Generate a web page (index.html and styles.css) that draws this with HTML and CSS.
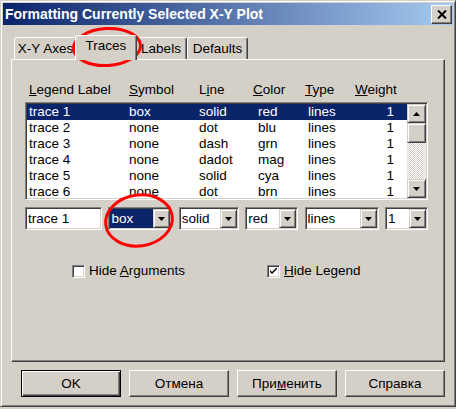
FILE: index.html
```html
<!DOCTYPE html>
<html>
<head>
<meta charset="utf-8">
<link rel="stylesheet" href="styles.css">
</head>
<body>
<div class="window">
  <div class="titlebar">
    <span class="title">Formatting Currently Selected X-Y Plot</span>
    <div class="close raised-btn">
      <svg width="10" height="9" viewBox="0 0 10 9"><path d="M1 0.5 L9 8.5 M9 0.5 L1 8.5" stroke="#000" stroke-width="2" fill="none"/></svg>
    </div>
  </div>
  <div class="body">
    <div class="tabs">
      <div class="tab t1">X-Y Axes</div>
      <div class="tab t2 selected">Traces</div>
      <div class="tab t3">Labels</div>
      <div class="tab t4">Defaults</div>
    </div>
    <div class="panel">
      <div class="cols-head">
        <span><u>L</u>egend Label</span>
        <span><u>S</u>ymbol</span>
        <span>L<u>i</u>ne</span>
        <span><u>C</u>olor</span>
        <span><u>T</u>ype</span>
        <span><u>W</u>eight</span>
      </div>
      <div class="listbox">
        <div class="rows">
          <div class="row sel"><span>trace 1</span><span>box</span><span>solid</span><span>red</span><span>lines</span><span class="w">1</span></div>
          <div class="row"><span>trace 2</span><span>none</span><span>dot</span><span>blu</span><span>lines</span><span class="w">1</span></div>
          <div class="row"><span>trace 3</span><span>none</span><span>dash</span><span>grn</span><span>lines</span><span class="w">1</span></div>
          <div class="row"><span>trace 4</span><span>none</span><span>dadot</span><span>mag</span><span>lines</span><span class="w">1</span></div>
          <div class="row"><span>trace 5</span><span>none</span><span>solid</span><span>cya</span><span>lines</span><span class="w">1</span></div>
          <div class="row"><span>trace 6</span><span>none</span><span>dot</span><span>brn</span><span>lines</span><span class="w">1</span></div>
        </div>
        <div class="scrollbar">
          <div class="sbtn raised"><svg width="7" height="4" viewBox="0 0 7 4"><path d="M3.5 0 L7 4 L0 4 Z" fill="#000"/></svg></div>
          <div class="thumb raised"></div>
          <div class="track"></div>
          <div class="sbtn raised"><svg width="7" height="4" viewBox="0 0 7 4"><path d="M0 0 L7 0 L3.5 4 Z" fill="#000"/></svg></div>
        </div>
      </div>
      <div class="editors">
        <div class="field f1"><span class="val">trace 1</span></div>
        <div class="field f2"><span class="val sel">box</span><div class="drop raised"><svg width="7" height="4" viewBox="0 0 7 4"><path d="M0 0 L7 0 L3.5 4 Z" fill="#000"/></svg></div></div>
        <div class="field f3"><span class="val">solid</span><div class="drop raised"><svg width="7" height="4" viewBox="0 0 7 4"><path d="M0 0 L7 0 L3.5 4 Z" fill="#000"/></svg></div></div>
        <div class="field f4"><span class="val">red</span><div class="drop raised"><svg width="7" height="4" viewBox="0 0 7 4"><path d="M0 0 L7 0 L3.5 4 Z" fill="#000"/></svg></div></div>
        <div class="field f5"><span class="val">lines</span><div class="drop raised"><svg width="7" height="4" viewBox="0 0 7 4"><path d="M0 0 L7 0 L3.5 4 Z" fill="#000"/></svg></div></div>
        <div class="field f6"><span class="val">1</span><div class="drop raised"><svg width="7" height="4" viewBox="0 0 7 4"><path d="M0 0 L7 0 L3.5 4 Z" fill="#000"/></svg></div></div>
      </div>
      <div class="checks">
        <div class="check"><span class="cbox"></span><span>Hide <u>A</u>rguments</span></div>
        <div class="check"><span class="cbox"><svg width="7" height="7" viewBox="0 0 7 7"><path d="M0 2 L0 4 L2 6 L7 1 L7 -1 L2 4 Z" fill="#000"/></svg></span><span><u>H</u>ide Legend</span></div>
      </div>
    </div>
    <div class="buttons">
      <div class="btn default">OK</div>
      <div class="btn">Отмена</div>
      <div class="btn">При<u>м</u>енить</div>
      <div class="btn">Справка</div>
    </div>
  </div>
  <svg class="annot" width="456" height="409" viewBox="0 0 456 409">
    <ellipse cx="106" cy="46" rx="33.5" ry="18.5" fill="none" stroke="#ff0000" stroke-width="3" transform="rotate(-3 106 46)"/>
    <ellipse cx="138" cy="219.5" rx="33.5" ry="25.5" fill="none" stroke="#ff0000" stroke-width="3" transform="rotate(-8 138 219.5)"/>
  </svg>
</div>
</body>
</html>
```

FILE: styles.css
```css
* { box-sizing: border-box; }
body {
  margin: 0;
  background: #d4d0c8;
  font-family: "Liberation Sans", Arial, sans-serif;
  font-size: 13.5px;
  color: #000;
}
.window {
  position: relative;
  width: 456px;
  height: 407px;
  border: 1px solid;
  border-color: #d4d0c8 #404040 #404040 #d4d0c8;
  box-shadow: inset 1px 1px #fff, inset -1px -1px #808080;
  padding: 2px;
  background: #d4d0c8;
}
.titlebar {
  height: 22px;
  display: flex;
  align-items: center;
  justify-content: space-between;
  background: linear-gradient(to right, #0a246a, #a6caf0);
  padding-left: 2px;
  padding-right: 1px;
}
.title {
  color: #fff;
  font-weight: bold;
  font-size: 14px;
  white-space: nowrap;
}
.raised-btn {
  background: #d4d0c8;
  border: 1px solid;
  border-color: #fff #404040 #404040 #fff;
  box-shadow: inset -1px -1px #808080;
}
.close {
  width: 21px;
  height: 19px;
  display: flex;
  align-items: center;
  justify-content: center;
}
.body {
  padding: 10px 8px 0 8px;
}
.tabs {
  display: flex;
  align-items: flex-end;
  height: 24px;
  padding-left: 3px;
}
.tab {
  height: 22px;
  border: 1px solid;
  border-bottom: none;
  border-color: #fff #404040 transparent #fff;
  box-shadow: inset -1px 0 #808080;
  border-radius: 3px 3px 0 0;
  text-align: center;
  line-height: 18px;
  padding-top: 2px;
  background: #d4d0c8;
  white-space: nowrap;
  overflow: hidden;
}
.t1 { width: 63px; }
.t2 { width: 62px; }
.t3 { width: 52px; }
.t4 { width: 61px; }
.tab.selected {
  height: 25px;
  margin: 0 -2px -1px;
  padding-top: 1px;
  position: relative;
  z-index: 1;
}
.panel {
  height: 303px;
  border: 1px solid;
  border-color: #fff #404040 #404040 #fff;
  box-shadow: inset -1px -1px #808080;
  padding: 22px 0 0 13px;
}
.cols-head {
  display: grid;
  grid-template-columns: 100px 70px 54px 52px 50px auto;
  padding-left: 4px;
  line-height: 16px;
  width: 403px;
  white-space: nowrap;
}
.listbox {
  margin-top: 4px;
  width: 403px;
  height: 98px;
  border: 1px solid;
  border-color: #808080 #fff #fff #808080;
  box-shadow: inset 1px 1px #404040, inset -1px -1px #d4d0c8;
  padding: 1px;
  background: #fff;
  display: flex;
}
.rows {
  flex: 1;
  overflow: hidden;
}
.row {
  display: grid;
  grid-template-columns: 100px 70px 59px 50px 50px 36px;
  padding-left: 2px;
  height: 16px;
  line-height: 16px;
  white-space: nowrap;
}
.row.sel {
  background: #0a246a;
  color: #fff;
}
.w { text-align: right; }
.raised {
  background: #d4d0c8;
  border: 1px solid;
  border-color: #d4d0c8 #404040 #404040 #d4d0c8;
  box-shadow: inset 1px 1px #fff, inset -1px -1px #808080;
}
.scrollbar {
  width: 19px;
  display: flex;
  flex-direction: column;
}
.sbtn {
  height: 19px;
  flex: none;
  display: flex;
  align-items: center;
  justify-content: center;
}
.thumb {
  height: 20px;
  flex: none;
}
.track {
  flex: 1;
  background: conic-gradient(#d4d0c8 25%, #fff 0 50%, #d4d0c8 0 75%, #fff 0) 0 0 / 2px 2px;
}
.editors {
  display: flex;
  justify-content: space-between;
  width: 403px;
  margin-top: 7px;
  height: 23px;
}
.field {
  height: 23px;
  border: 1px solid;
  border-color: #808080 #fff #fff #808080;
  box-shadow: inset 1px 1px #404040, inset -1px -1px #d4d0c8;
  padding: 1px;
  background: #fff;
  display: flex;
}
.val {
  flex: 1;
  line-height: 19px;
  padding-left: 1px;
  white-space: nowrap;
  overflow: hidden;
}
.val.sel {
  background: #0a246a;
  color: #fff;
}
.drop {
  width: 17px;
  flex: none;
  display: flex;
  align-items: center;
  justify-content: center;
}
.f1 { width: 77px; }
.f2 { width: 64px; }
.f3 { width: 60px; }
.f4 { width: 53px; }
.f5 { width: 74px; }
.f6 { width: 43px; }
.checks {
  display: grid;
  grid-template-columns: 195px auto;
  padding-left: 47px;
  margin-top: 33px;
  line-height: 16px;
}
.check {
  display: flex;
  align-items: center;
  gap: 4px;
}
.cbox {
  width: 13px;
  height: 13px;
  border: 1px solid;
  border-color: #808080 #fff #fff #808080;
  box-shadow: inset 1px 1px #404040, inset -1px -1px #d4d0c8;
  background: #fff;
  display: flex;
  align-items: center;
  justify-content: center;
}
.buttons {
  display: flex;
  gap: 8px;
  margin: 8px 0 0 10px;
}
.btn {
  width: 100px;
  height: 27px;
  border: 1px solid;
  border-color: #fff #404040 #404040 #fff;
  box-shadow: inset -1px -1px #808080;
  text-align: center;
  line-height: 25px;
}
.btn.default {
  border-color: #000;
  box-shadow: inset 1px 1px #fff, inset -1px -1px #404040, inset -2px -2px #808080;
}
.annot {
  position: absolute;
  left: 0;
  top: 0;
  pointer-events: none;
}
```
